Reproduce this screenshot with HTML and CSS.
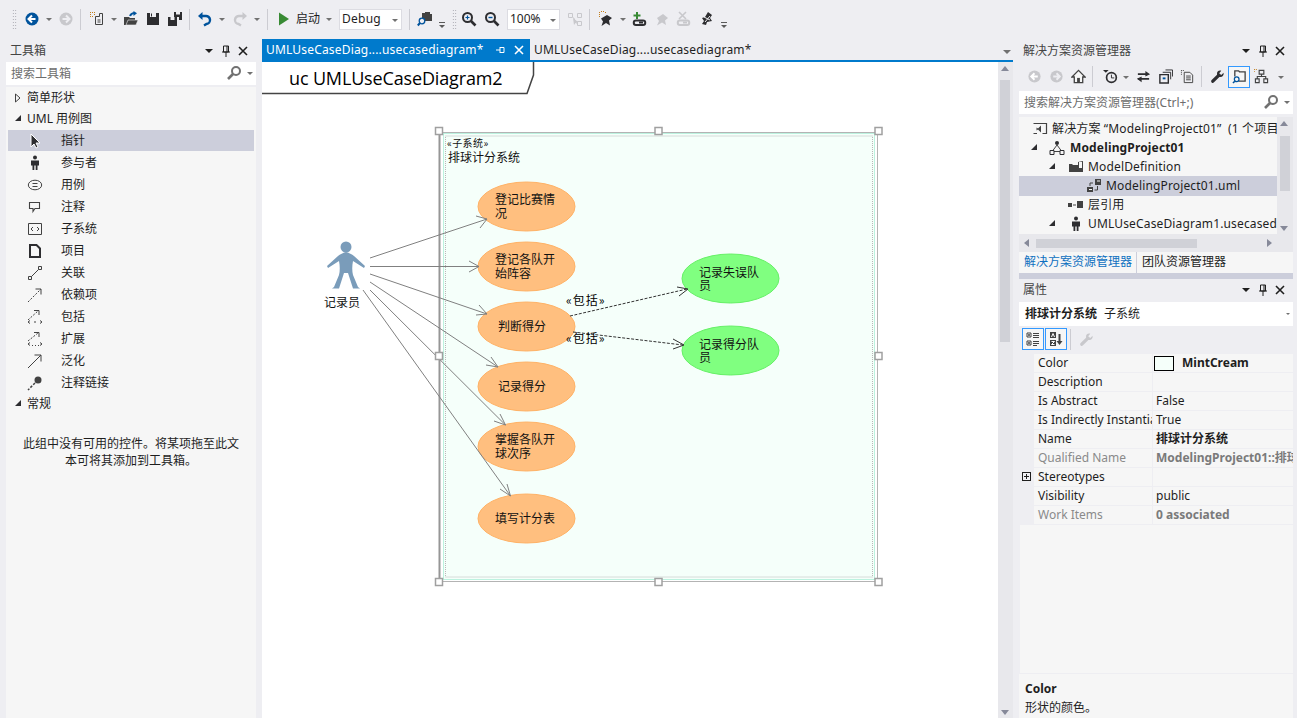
FILE: index.html
```html
<!DOCTYPE html>
<html lang="zh">
<head>
<meta charset="utf-8">
<title>UML</title>
<link rel="stylesheet" href="styles.css">
</head>
<body>
<svg class="defs" width="0" height="0">
  <defs>
    <symbol id="i-back" viewBox="0 0 16 16"><circle cx="8" cy="8" r="6.5" fill="currentColor"/><path d="M8 4.5 4.5 8 8 11.500M5 8h6.500" fill="none" stroke="#fff" stroke-width="2"/></symbol>
    <symbol id="i-fwd" viewBox="0 0 16 16"><circle cx="8" cy="8" r="6.500" fill="currentColor"/><path d="M8 4.500 11.500 8 8 11.500M11 8H4.500" fill="none" stroke="#eeeef2" stroke-width="2"/></symbol>
    <symbol id="i-new" viewBox="0 0 16 16"><path d="M6.500 5.500h4v-3h3v11h-7z" fill="none" stroke="#424242"/><path d="M8.500 9h3M8.500 11h3" stroke="#424242"/><path d="M1 1h1v1H1zM3 1h1v1H3zM5 1h1v1H5zM1 3h1v1H1zM5 3h1v1H5zM1 5h1v1H1zM3 5h1v1H3z" fill="#c27d1a"/></symbol>
    <symbol id="i-open" viewBox="0 0 16 16"><path d="M1 6h5l1 1h5v7H1z" fill="#424242"/><path d="M3 14 5 9h10l-2 5z" fill="#424242" stroke="#eeeef2" stroke-width=".6"/><path d="M7 5c1-2.500 3-3 5-3" fill="none" stroke="#00539c" stroke-width="2"/><path d="M10.500 0 14 2.200 10.500 5z" fill="#00539c"/></symbol>
    <symbol id="i-save" viewBox="0 0 16 16"><path d="M2 2h12v12H2z" fill="#2d2d30"/><path d="M5 2h6v4H5z" fill="#eeeef2"/><path d="M5 10h6v4H5z" fill="#2d2d30"/><path d="M6 2.500h1v3H6z" fill="#2d2d30"/></symbol>
    <symbol id="i-saveall" viewBox="0 0 16 16"><path d="M7 1h8v8h-3V6H7z" fill="#2d2d30"/><path d="M9 1h4v2.500H9z" fill="#eeeef2"/><path d="M1 6h9v9H1z" fill="#2d2d30"/><path d="M3.500 6h4v3h-4z" fill="#eeeef2"/></symbol>
    <symbol id="i-undo" viewBox="0 0 16 16"><path d="M3.500 5h5a4 4 0 0 1 1 8l-2.500 1.500" fill="none" stroke="currentColor" stroke-width="2.400"/><path d="M1 5 5.500 1v8z" fill="currentColor"/></symbol>
    <symbol id="i-redo" viewBox="0 0 16 16"><path d="M12.500 5h-5a4 4 0 0 0-1 8l2.500 1.500" fill="none" stroke="currentColor" stroke-width="2.400"/><path d="M15 5 10.500 1v8z" fill="currentColor"/></symbol>
    <symbol id="i-play" viewBox="0 0 16 16"><path d="M3 1.500 13 8 3 14.500z" fill="#388a34"/></symbol>
    <symbol id="i-find" viewBox="0 0 16 16"><path d="M5 2h3V1h5v2h2v7H8a4 4 0 0 0-3-2z" fill="#424242"/><circle cx="5" cy="10" r="2.800" fill="#eeeef2" stroke="#00539c" stroke-width="1.300"/><path d="M3 12 .8 14.500" stroke="#00539c" stroke-width="2"/></symbol>
    <symbol id="i-zoomin" viewBox="0 0 16 16"><circle cx="6.500" cy="6.500" r="4.500" fill="#eeeef2" stroke="#2d2d30" stroke-width="2"/><path d="m10 10 4.500 4.500" stroke="#2d2d30" stroke-width="2.600"/><path d="M4.500 6.500h4M6.500 4.500v4" stroke="#00539c" stroke-width="1.200"/></symbol>
    <symbol id="i-zoomout" viewBox="0 0 16 16"><circle cx="6.500" cy="6.500" r="4.500" fill="#eeeef2" stroke="#2d2d30" stroke-width="2"/><path d="m10 10 4.500 4.500" stroke="#2d2d30" stroke-width="2.600"/><path d="M4.500 6.500h4" stroke="#00539c" stroke-width="1.400"/></symbol>
    <symbol id="i-layout" viewBox="0 0 16 16"><path d="M1.500 2.500h4v4h-4zM10.500 2.500h4v4h-4zM10.500 10.500h4v4h-4zM6.500 6.500l3 6" fill="none" stroke="#c8c8cc"/><path d="m6 7 1 7 1.500-2 2.500-1z" fill="#c8c8cc"/></symbol>
    <symbol id="i-pinstar" viewBox="0 0 16 16"><path d="M9 4 14 7 11 9.500 12 14.500 8 12 3.500 15 5 10.500 3 7.500z" fill="#2d2d30"/><path d="M1 1h1v1H1zM3 0h1v1H3zM5 0h1v1H5zM7 1h1v1H7zM1 3h1v1H1zM1 5h1v1H1z" fill="#c27d1a"/></symbol>
    <symbol id="i-link" viewBox="0 0 16 16"><path d="M3 9.500h7a2.200 2.200 0 0 1 0 4.500H3a2.200 2.200 0 0 1 0-4.500z" transform="translate(1)" fill="none" stroke="currentColor" stroke-width="2"/><path d="M7 11.500h4" stroke="currentColor" stroke-width="2"/></symbol>
    <symbol id="i-linkadd" viewBox="0 0 16 16"><use href="#i-link"/><path d="M1.500 4.500h7M5 1v7" stroke="#388a34" stroke-width="2"/></symbol>
    <symbol id="i-linkdel" viewBox="0 0 16 16"><use href="#i-link"/><path d="m3 1 7 7M10 1 3 8" stroke="currentColor" stroke-width="1.600"/></symbol>
    <symbol id="i-pin" viewBox="0 0 16 16"><path d="M9 3 14 7 11 9.500 12 14 8 11.500 3 14.500 5 10 3 7z" fill="currentColor"/></symbol>
    <symbol id="i-walk" viewBox="0 0 16 16"><path d="m9 1 4 3-2 3 2 3-5 1-1 3-4-1 2-3-2-3 3-1z" fill="#2d2d30"/><path d="m5 6 6 3M6 11l5-6" stroke="#eeeef2"/></symbol>
    <symbol id="i-search" viewBox="0 0 16 16"><circle cx="10" cy="6" r="4" fill="none" stroke="#717171" stroke-width="2"/><path d="M7 9 2 14" stroke="#717171" stroke-width="2.600"/></symbol>
    <symbol id="i-home" viewBox="0 0 16 16"><path d="M8 1.500 1 8.500h2.500v6h9v-6H15z" fill="#f6f6f6" stroke="#424242" stroke-width="1.400"/><path d="M6.500 9.500h3v5h-3z" fill="#424242"/></symbol>
    <symbol id="i-clock" viewBox="0 0 16 16"><circle cx="9" cy="9" r="5.200" fill="none" stroke="#2d2d30" stroke-width="1.800"/><path d="M9 6v3.500h3" fill="none" stroke="#2d2d30"/><path d="M0 1h6L3 4z" fill="#2d2d30"/></symbol>
    <symbol id="i-sync" viewBox="0 0 16 16"><path d="M2 6h9M2 11h12" transform="translate(0 -.5)" stroke="#2d2d30" stroke-width="2"/><path d="m10 2 5 3.500L10 8zM6 8l-5 2.500L6 14z" fill="#2d2d30"/></symbol>
    <symbol id="i-collapse" viewBox="0 0 16 16"><path d="M2 6h9v9H2z" fill="none" stroke="#2d2d30" stroke-width="1.500"/><path d="M5 10h3" stroke="#00539c" stroke-width="2"/><path d="M5 3.500h8.500V11M8 1h7.500v7" fill="none" stroke="#2d2d30"/></symbol>
    <symbol id="i-props" viewBox="0 0 16 16"><path d="M1 1h1v1H1zM3 1h1v1H3zM1 3h1v1H1zM1 5h1v1H1z" fill="#424242"/><path d="M4.500 3.500h6l3 3v8h-9z" fill="none" stroke="#424242"/><path d="M6.500 7.500h5M6.500 9.500h5M6.500 11.500h5" stroke="#424242"/></symbol>
    <symbol id="i-wrench" viewBox="0 0 16 16"><path d="M14.500 4 12 6.500 9.800 4.500 12 1.800C9.500 1 7 2.500 7.500 6L1.500 12a1.800 1.800 0 0 0 2.500 2.500L10 8.500c3 .8 5-1.500 4.500-4.500z" fill="currentColor"/></symbol>
    <symbol id="i-viewfolder" viewBox="0 0 16 16"><path d="M3 8V2h4l1 1h6v10H7" fill="none" stroke="#424242" stroke-width="1.400"/><circle cx="5" cy="11" r="2.500" fill="none" stroke="#00539c" stroke-width="1.300"/><path d="M3 13 1 15" stroke="#00539c" stroke-width="1.600"/></symbol>
    <symbol id="i-class" viewBox="0 0 16 16"><path d="M5.500 1.500h5v4h-5zM1.500 10.500h4v4h-4zM10.500 10.500h4v4h-4zM8 5.500v2.500M3.500 10.500V8h9v2.500" fill="none" stroke="#424242" stroke-width="1.200"/><path d="M0 0h1v1H0zM2 0h1v1H2zM0 2h1v1H0z" fill="#c27d1a"/></symbol>
    <symbol id="i-sln" viewBox="0 0 16 16"><path d="M1.500 2.500h13v10h-4M5 12.500H1.500z" fill="none" stroke="#424242" stroke-width="1.200"/><path d="M6 8.500l3 3v-7l-3 3-1.500-1v3z" fill="#424242"/></symbol>
    <symbol id="i-model" viewBox="0 0 16 16"><circle cx="8" cy="3" r="2" fill="#2d2d30"/><path d="M8 5 3.500 11M8 5l4.500 6M3 11.500h10" fill="none" stroke="#424242"/><path d="M1 10.500h4v4H1zM11 10.500h4v4h-4z" fill="#f6f6f6" stroke="#2d2d30"/></symbol>
    <symbol id="i-folder" viewBox="0 0 16 16"><path d="M1 5h3l1 1h5V3l5-1v11H1z" fill="#424242"/><path d="M11 3h3v6h-3z" fill="#f6f6f6"/></symbol>
    <symbol id="i-uml" viewBox="0 0 16 16"><path d="M9 1h6v6H9zM1 9h6v5H1z" fill="#424242"/><path d="M11 2.500h3v1h-3zM3 11h3v1H3z" fill="#f6f6f6"/><path d="M11.500 8v4h-3M7 5H4v3" fill="none" stroke="#424242"/></symbol>
    <symbol id="i-layer" viewBox="0 0 16 16"><path d="M1 6h4v4H1zM10 4h6v7h-6z" fill="#424242"/><path d="M6 8h3" stroke="#424242"/></symbol>
    <symbol id="i-actor" viewBox="0 0 16 16"><circle cx="8" cy="2.500" r="2" fill="#2d2d30"/><path d="M4 5.500h8v5h-1.500V15H8.700v-4.500H7.300V15H5.500v-4.500H4z" fill="#2d2d30"/></symbol>
    <symbol id="i-pointer" viewBox="0 0 16 16"><path d="M4 1v13l3-3 2 4 2-1-2-4h4z" fill="#2d2d30" stroke="#fff"/></symbol>
    <symbol id="i-usecase" viewBox="0 0 16 16"><ellipse cx="8" cy="8" rx="6.700" ry="4.800" fill="none" stroke="#424242"/><path d="M5.500 6.500h5M5.500 9.500h5" stroke="#424242"/></symbol>
    <symbol id="i-comment" viewBox="0 0 16 16"><path d="M2.500 3.500h10v6H8l-2 3v-3H2.500z" fill="none" stroke="#424242" stroke-width="1.100"/></symbol>
    <symbol id="i-subsys" viewBox="0 0 16 16"><path d="M1.500 2.500h13v11h-13z" fill="none" stroke="#424242"/><path d="M6 6 4 8l2 2M10 6l2 2-2 2" fill="none" stroke="#424242"/></symbol>
    <symbol id="i-artifact" viewBox="0 0 16 16"><path d="M3 2h6.500L13 5.500V14H3z" fill="#f6f6f6" stroke="#2d2d30" stroke-width="2"/></symbol>
    <symbol id="i-assoc" viewBox="0 0 16 16"><path d="M1.500 11.500h3v3h-3zM11.500 1.500h3v3h-3zM4.500 11.500l7-7" fill="none" stroke="#424242"/></symbol>
    <symbol id="i-dep" viewBox="0 0 16 16"><path d="M1 15 14 2" fill="none" stroke="#424242" stroke-dasharray="2 1.500"/><path d="M8.500 2H14v5.500" fill="none" stroke="#424242"/></symbol>
    <symbol id="i-incl" viewBox="0 0 16 16"><path d="M1 11 11 2" fill="none" stroke="#424242" stroke-dasharray="2 1.500"/><path d="M7 1.500h5V6M3 11.500 1 13l2 1.500M13 11.500l2 1.500-2 1.500M7 13h2" fill="none" stroke="#424242"/></symbol>
    <symbol id="i-ext" viewBox="0 0 16 16"><path d="M1 10 11 2" fill="none" stroke="#424242" stroke-dasharray="2 1.500"/><path d="M7 1.500h5V6M3 11.500 1 13l2 1.500M13 11.500l2 1.500-2 1.500" fill="none" stroke="#424242"/><path d="M5 14h1v1H5zM8 14h1v1H8zM11 14h1v1h-1z" fill="#424242"/></symbol>
    <symbol id="i-gen" viewBox="0 0 16 16"><path d="M1 15 14 2M7.500 2H14v6.500" fill="none" stroke="#424242"/></symbol>
    <symbol id="i-note" viewBox="0 0 16 16"><circle cx="11" cy="5" r="3.500" fill="#424242"/><path d="M8 8 1 15" stroke="#424242" stroke-width="1.500" stroke-dasharray="2.500 1.500"/></symbol>
    <symbol id="i-cat" viewBox="0 0 16 16"><path d="M2 2h4v4H2zM2 10h4v4H2z" fill="none" stroke="#424242"/><path d="M8 2.500h6M8 4.500h6M8 6.500h6M8 10.500h6M8 12.500h6M8 14.500h4" stroke="#424242"/><path d="M3 4h2M4 3v2M3 12h2M4 11v2" stroke="#424242"/></symbol>
    <symbol id="i-az" viewBox="0 0 16 16"><path d="M2 1h6v6H2zM2 9h6v6H2z" fill="#424242"/><path d="M3.500 6l1.500-3.500L6.500 6M3.500 10.500h3l-3 3h3" fill="none" stroke="#fff"/><path d="M11.500 3v9" stroke="#424242" stroke-width="2"/><path d="M8.500 10h6l-3 4z" fill="#424242"/></symbol>
    <symbol id="i-tpin" viewBox="0 0 10 10"><path d="M1 5h4M5 2v6M5 2.500h4v5H5" fill="none" stroke="currentColor"/></symbol>
    <symbol id="i-x" viewBox="0 0 10 10"><path d="m1 1 8 8M9 1 1 9" stroke="currentColor" stroke-width="1.600"/></symbol>
    <symbol id="i-vpin" viewBox="0 0 10 12"><path d="M2.500 1h5v6h-5zM1 7h8M5 7v5M6 1v6" fill="none" stroke="currentColor"/></symbol>
    <symbol id="i-tri-r" viewBox="0 0 8 10"><path d="M1.500 1 6 5 1.500 9z" fill="#f6f6f6" stroke="#424242"/></symbol>
  </defs>
</svg>

<header class="toolbar">
  <span class="grip-v ml12"></span>
  <span class="ic blue ml4"><svg><use href="#i-back"/></svg></span><span class="ca"></span>
  <span class="ic off"><svg><use href="#i-fwd"/></svg></span>
  <span class="sep ml3"></span>
  <span class="ic ml5"><svg><use href="#i-new"/></svg></span><span class="ca"></span>
  <span class="ic"><svg><use href="#i-open"/></svg></span>
  <span class="ic"><svg><use href="#i-save"/></svg></span>
  <span class="ic"><svg><use href="#i-saveall"/></svg></span>
  <span class="sep ml3"></span>
  <span class="ic blue ml4"><svg><use href="#i-undo"/></svg></span><span class="ca"></span>
  <span class="ic off ml1"><svg><use href="#i-redo"/></svg></span><span class="ca"></span>
  <span class="sep ml4"></span>
  <span class="ic ml5"><svg><use href="#i-play"/></svg></span>
  <span class="tb-text">启动</span><span class="ca ml3"></span>
  <span class="combo combo-debug ml4">Debug<i class="ca-in"></i></span>
  <span class="sep ml7"></span>
  <span class="ic ml4"><svg><use href="#i-find"/></svg></span>
  <span class="over ml1"></span>
  <span class="grip-v ml3"></span>
  <span class="ic ml1"><svg><use href="#i-zoomin"/></svg></span>
  <span class="ic ml1"><svg><use href="#i-zoomout"/></svg></span>
  <span class="combo combo-zoom ml4">100%<i class="ca-in"></i></span>
  <span class="ic ml4"><svg><use href="#i-layout"/></svg></span>
  <span class="sep ml3"></span>
  <span class="ic ml5"><svg><use href="#i-pinstar"/></svg></span><span class="ca"></span>
  <span class="ic dark"><svg><use href="#i-linkadd"/></svg></span>
  <span class="ic off"><svg><use href="#i-pin"/></svg></span>
  <span class="ic off"><svg><use href="#i-linkdel"/></svg></span>
  <span class="ic ml1"><svg><use href="#i-walk"/></svg></span>
  <span class="over ml1"></span>
</header>

<main class="workspace">
  <aside class="toolbox">
    <div class="ptitle"><span>工具箱</span><span class="grip-h"></span><i class="t-caret"></i><svg class="t-pin"><use href="#i-vpin"/></svg><svg class="t-x"><use href="#i-x"/></svg></div>
    <div class="search search-tool"><span>搜索工具箱</span><svg class="s-ic"><use href="#i-search"/></svg><i class="ca-in"></i></div>
    <div class="tool-list">
      <div class="group"><svg class="tri-r"><use href="#i-tri-r"/></svg>简单形状</div>
      <div class="group"><i class="tri-down"></i>UML 用例图</div>
      <div class="tool selected"><svg><use href="#i-pointer"/></svg>指针</div>
      <div class="tool"><svg><use href="#i-actor"/></svg>参与者</div>
      <div class="tool"><svg><use href="#i-usecase"/></svg>用例</div>
      <div class="tool"><svg><use href="#i-comment"/></svg>注释</div>
      <div class="tool"><svg><use href="#i-subsys"/></svg>子系统</div>
      <div class="tool"><svg><use href="#i-artifact"/></svg>项目</div>
      <div class="tool"><svg><use href="#i-assoc"/></svg>关联</div>
      <div class="tool"><svg><use href="#i-dep"/></svg>依赖项</div>
      <div class="tool"><svg><use href="#i-incl"/></svg>包括</div>
      <div class="tool"><svg><use href="#i-ext"/></svg>扩展</div>
      <div class="tool"><svg><use href="#i-gen"/></svg>泛化</div>
      <div class="tool"><svg><use href="#i-note"/></svg>注释链接</div>
      <div class="group group-last"><i class="tri-down"></i>常规</div>
      <p class="empty">此组中没有可用的控件。将某项拖至此文<br>本可将其添加到工具箱。</p>
    </div>
  </aside>

  <section class="editor">
    <div class="tabs">
      <div class="tab active"><span class="tab-name">UMLUseCaseDiag....usecasediagram*</span><svg class="tab-pin"><use href="#i-tpin"/></svg><svg class="tab-x"><use href="#i-x"/></svg></div>
      <div class="tab"><span class="tab-name">UMLUseCaseDiag....usecasediagram*</span></div>
      <i class="tabs-caret"></i>
    </div>
    <div class="doc">
      <div class="canvas">
        <svg class="diagram" viewBox="262 62 736 656" width="736" height="656">
          <path class="frame" d="M262 93.500H527L533.500 75V62"/>
          <text class="uc-title" x="289" y="85">uc UMLUseCaseDiagram2</text>

          <rect class="sys-fill" x="443.500" y="133.500" width="431" height="446"/>
          <rect class="sys-dots" x="445.500" y="136" width="427" height="441"/>
          <rect class="sel-dash" x="439.500" y="132.500" width="438" height="449"/>
          <path class="sel-left" d="M439.500 131V582"/>
          <text class="small" x="447" y="147">«子系统»</text>
          <text class="lbl" x="448" y="162">排球计分系统</text>

          <g class="orange">
            <ellipse cx="526.500" cy="206.500" rx="48.500" ry="24.500"/>
            <ellipse cx="526.500" cy="266.500" rx="48.500" ry="24.500"/>
            <ellipse cx="526.500" cy="326.500" rx="48.500" ry="24.500"/>
            <ellipse cx="526.500" cy="386.500" rx="48.500" ry="24.500"/>
            <ellipse cx="526.500" cy="446.500" rx="48.500" ry="24.500"/>
            <ellipse cx="526.500" cy="518.500" rx="48.500" ry="24.500"/>
          </g>
          <g class="green">
            <ellipse cx="730.500" cy="278.500" rx="48.500" ry="24.500"/>
            <ellipse cx="730.500" cy="350.500" rx="48.500" ry="24.500"/>
          </g>

          <g class="assoc">
            <path d="M370 258 487 219M476 216 487 219 480 228"/>
            <path d="M370 266.500H479M469 261 479 266.500 469 272"/>
            <path d="M370 274 487 314M479 305 487 314 476 315"/>
            <path d="M370 282 498 367M491 357 498 367 486 365"/>
            <path d="M370 290 505.500 425M500 414 505.500 425 494 421"/>
            <path d="M363 290 510.500 496M507 484 510.500 496 500 489"/>
          </g>
          <g class="incl">
            <path class="dash" d="M570 316 687 289"/>
            <path d="M677 287 688 289 679 296"/>
            <path class="dash" d="M573 332 683 345"/>
            <path d="M673 339 684 345 673 349"/>
          </g>

          <circle class="actor" cx="346" cy="247" r="5.500"/>
          <path class="actor" d="M346 252C349 253 352 254 354 256L365 266 364 268 353 261C352 266 352 271 353 275L358 287 360 288.500H353L348 273H344L339 288.500H332L334 287 339 275C340 271 340 266 339 261L328 268 327 266 338 256C340 254 343 253 346 252Z"/>
          <text class="lbl" x="324" y="307">记录员</text>

          <g class="lbl">
            <text x="495" y="203.500">登记比赛情</text><text x="495" y="217.500">况</text>
            <text x="495" y="263.500">登记各队开</text><text x="495" y="277.500">始阵容</text>
            <text x="498" y="331">判断得分</text>
            <text x="498" y="390.500">记录得分</text>
            <text x="495" y="443.500">掌握各队开</text><text x="495" y="457.500">球次序</text>
            <text x="495" y="522.500">填写计分表</text>
            <text x="699" y="276.500">记录失误队</text><text x="699" y="290">员</text>
            <text x="699" y="348.500">记录得分队</text><text x="699" y="362">员</text>
            <text class="incl-lbl" x="566" y="305">«包括»</text>
            <text class="incl-lbl" x="566" y="343">«包括»</text>
          </g>

          <g class="handles">
            <rect x="435.500" y="127.500" width="7" height="7"/><rect x="655" y="127.500" width="7" height="7"/><rect x="875" y="127.500" width="7" height="7"/>
            <rect x="435.500" y="352.500" width="7" height="7"/><rect x="875" y="352.500" width="7" height="7"/>
            <rect x="435.500" y="578.500" width="7" height="7"/><rect x="655" y="578.500" width="7" height="7"/><rect x="875" y="578.500" width="7" height="7"/>
          </g>
        </svg>
      </div>
      <div class="vscroll">
        <i class="ar-up"></i>
        <span class="thumb"></span>
        <i class="ar-down"></i>
      </div>
    </div>
  </section>

  <aside class="right">
    <div class="ptitle"><span>解决方案资源管理器</span><span class="grip-h"></span><i class="t-caret"></i><svg class="t-pin"><use href="#i-vpin"/></svg><svg class="t-x"><use href="#i-x"/></svg></div>
    <div class="se-bar">
      <span class="ic off"><svg><use href="#i-back"/></svg></span>
      <span class="ic off"><svg><use href="#i-fwd"/></svg></span>
      <span class="ic"><svg><use href="#i-home"/></svg></span>
      <span class="sep-s"></span>
      <span class="ic"><svg><use href="#i-clock"/></svg></span><span class="ca-s"></span>
      <span class="ic"><svg><use href="#i-sync"/></svg></span>
      <span class="ic"><svg><use href="#i-collapse"/></svg></span>
      <span class="ic"><svg><use href="#i-props"/></svg></span>
      <span class="sep-s sep-s2"></span>
      <span class="ic dark"><svg><use href="#i-wrench"/></svg></span>
      <span class="ic on"><svg><use href="#i-viewfolder"/></svg></span>
      <span class="ic"><svg><use href="#i-class"/></svg></span><span class="ca-s ml4"></span>
    </div>
    <div class="search search-se"><span>搜索解决方案资源管理器(Ctrl+;)</span><svg class="s-ic"><use href="#i-search"/></svg><i class="ca-in"></i></div>
    <div class="tree-wrap">
      <div class="tree">
        <div class="row d1"><svg><use href="#i-sln"/></svg><span>解决方案&nbsp;“ModelingProject01”&nbsp;&nbsp;(1 个项目)</span></div>
        <div class="row d2"><i class="tri-down"></i><svg><use href="#i-model"/></svg><b>ModelingProject01</b></div>
        <div class="row d3"><i class="tri-down"></i><svg><use href="#i-folder"/></svg><span>ModelDefinition</span></div>
        <div class="row d4 selected"><svg><use href="#i-uml"/></svg><span>ModelingProject01.uml</span></div>
        <div class="row d3b"><svg><use href="#i-layer"/></svg><span>层引用</span></div>
        <div class="row d3"><i class="tri-down"></i><svg><use href="#i-actor"/></svg><span>UMLUseCaseDiagram1.usecasediagram</span></div>
      </div>
      <div class="tree-v"><i class="ar-up"></i><span class="tv-thumb"></span><i class="ar-down"></i></div>
    </div>
    <div class="tree-h"><i class="ar-left"></i><span class="th-thumb"></span><i class="ar-right"></i></div>
    <div class="r-tabs"><span class="r-tab active">解决方案资源管理器</span><span class="r-tab">团队资源管理器</span></div>
    <div class="splitter"></div>
    <div class="ptitle prop-title"><span>属性</span><span class="grip-h"></span><i class="t-caret"></i><svg class="t-pin"><use href="#i-vpin"/></svg><svg class="t-x"><use href="#i-x"/></svg></div>
    <div class="prop-combo"><b>排球计分系统</b><span>子系统</span><i class="ca-in"></i></div>
    <div class="prop-bar">
      <span class="pb on"><svg><use href="#i-cat"/></svg></span>
      <span class="pb on"><svg><use href="#i-az"/></svg></span>
      <span class="sep-p"></span>
      <span class="ic off"><svg><use href="#i-wrench"/></svg></span>
    </div>
    <div class="props">
      <div class="p-row"><span class="p-g"></span><span class="p-n">Color</span><span class="p-v"><i class="swatch"></i><b>MintCream</b></span></div>
      <div class="p-row"><span class="p-g"></span><span class="p-n">Description</span><span class="p-v"></span></div>
      <div class="p-row"><span class="p-g"></span><span class="p-n">Is Abstract</span><span class="p-v">False</span></div>
      <div class="p-row"><span class="p-g"></span><span class="p-n">Is Indirectly Instantiated</span><span class="p-v">True</span></div>
      <div class="p-row"><span class="p-g"></span><span class="p-n">Name</span><span class="p-v"><b>排球计分系统</b></span></div>
      <div class="p-row ro"><span class="p-g"></span><span class="p-n">Qualified Name</span><span class="p-v"><b>ModelingProject01::排球计分系统</b></span></div>
      <div class="p-row"><span class="p-g"><i class="plus"></i></span><span class="p-n">Stereotypes</span><span class="p-v"></span></div>
      <div class="p-row"><span class="p-g"></span><span class="p-n">Visibility</span><span class="p-v">public</span></div>
      <div class="p-row ro"><span class="p-g"></span><span class="p-n">Work Items</span><span class="p-v"><b>0 associated</b></span></div>
      <div class="p-fill"></div>
    </div>
    <div class="desc"><b>Color</b><span>形状的颜色。</span></div>
  </aside>
</main>
</body>
</html>
```

FILE: styles.css
```css
* { box-sizing: border-box; }
html, body { margin: 0; height: 718px; overflow: hidden; }
body {
  width: 1297px;
  background: #eeeef2;
  color: #1e1e1e;
  font: 12px/16px "Noto Sans", "Noto Sans CJK SC", sans-serif;
  display: flex;
  flex-direction: column;
}
.defs { position: absolute; }
i { display: block; font-style: normal; }
b { font-weight: 700; }

/* main toolbar */
.toolbar { height: 39px; display: flex; align-items: center; flex: none; padding-bottom: 1px; }
.ic { width: 22px; height: 22px; display: flex; align-items: center; justify-content: center; flex: none; color: #424242; }
.ic svg { width: 16px; height: 16px; }
.ic.blue { color: #00539c; }
.ic.off { color: #c8c8cc; }
.ic.dark { color: #2d2d30; }
.ic.on { border: 1px solid #3399ff; background: #f6f6f6; }
.ca { width: 12px; height: 22px; flex: none; position: relative; }
.ca::after, .ca-s::after { content: ""; position: absolute; left: 3px; top: 10px; border: 3px solid transparent; border-top: 3px solid #717171; border-bottom: 0; }
.sep { width: 1px; height: 21px; background: #ccccd2; flex: none; }
.grip-v { width: 5px; height: 20px; flex: none; background: radial-gradient(circle, #a0a0a8 .7px, transparent .8px) 0 0 / 2.5px 3px; }
.tb-text { width: 25px; flex: none; color: #1e1e1e; white-space: nowrap; padding-left: 1px; }
.combo { height: 21px; background: #fff; border: 1px solid #dcdce2; flex: none; padding: 1px 0 0 2px; position: relative; }
.combo-debug { width: 63px; letter-spacing: .25px; }
.combo-zoom { width: 53px; }
.ca-in { position: absolute; right: 3px; top: 9px; border: 3px solid transparent; border-top: 3px solid #717171; border-bottom: 0; }
.over { width: 12px; height: 22px; flex: none; position: relative; }
.over::before { content: ""; position: absolute; left: 2px; top: 14px; width: 6px; height: 1px; background: #5a5a5a; }
.over::after { content: ""; position: absolute; left: 2px; top: 17px; border: 3px solid transparent; border-top: 3px solid #5a5a5a; border-bottom: 0; }
.ml1 { margin-left: 1px; } .ml3 { margin-left: 3px; } .ml4 { margin-left: 4px; }
.ml5 { margin-left: 5px; } .ml7 { margin-left: 7px; } .ml12 { margin-left: 12px; }

/* workspace */
.workspace { flex: 1; display: grid; grid-template-columns: 262px 757px 278px; min-height: 0; }

/* panel title */
.ptitle { height: 23px; display: flex; align-items: center; color: #444; padding-right: 5px; flex: none; }
.grip-h { flex: 1; height: 5px; margin: 0 8px 0 7px; background: radial-gradient(circle, #b0b0b8 .6px, transparent .7px) 0 0 / 2px 2px; }
.t-caret { width: 0; height: 0; border: 4px solid transparent; border-top: 4px solid #1e1e1e; border-bottom: 0; margin-right: 8px; }
.t-pin { width: 10px; height: 12px; color: #1e1e1e; margin-right: 7px; }
.t-x { width: 10px; height: 10px; color: #1e1e1e; margin-right: 3px; }

/* toolbox */
.toolbox { padding: 0 6px; display: flex; flex-direction: column; box-sizing: content-box; width: 250px; }
.toolbox .ptitle { padding-left: 4px; }
.search { height: 23px; background: #fff; display: flex; align-items: center; position: relative; color: #6d6d6d; flex: none; padding-left: 5px; }
.s-ic { width: 16px; height: 16px; position: absolute; right: 14px; top: 3px; }
.search .ca-in { top: 10px; }
.search-tool { margin-bottom: 2px; }
.tool-list { flex: 1; background: #f6f6f6; }
.group { height: 21px; display: flex; align-items: center; padding-left: 21px; position: relative; }
.group-last { margin-top: -1px; }
.group i { position: absolute; left: 9px; top: 7px; }
.tri-r { position: absolute; left: 8px; top: 6px; width: 8px; height: 10px; }
.tri-down { width: 0; height: 0; border-right: 6px solid #2d2d30; border-top: 6px solid transparent; }
.tool { height: 22px; display: flex; align-items: center; padding-left: 53px; position: relative; margin: 0 2px; }
.tool svg { position: absolute; left: 19px; top: 3px; width: 16px; height: 16px; }
.tool.selected { background: #cccedb; height: 21px; margin-top: 1px; margin-bottom: 1px; }
.empty { margin: 21px 0 0; text-align: center; line-height: 17px; }

/* editor */
.editor { display: flex; flex-direction: column; min-width: 0; }
.tabs { height: 23px; display: flex; flex: none; border-bottom: 2px solid #007acc; margin-right: 6px; position: relative; }
.tab { height: 21px; padding: 1px 0 0 4px; display: flex; align-items: center; color: #1e1e1e; white-space: nowrap; }
.tab-name { letter-spacing: .18px; }
.tab.active { background: #007acc; color: #fff; width: 268px; position: relative; }
.tab-pin { width: 10px; height: 10px; margin-left: 11px; }
.tab-x { width: 10px; height: 10px; margin-left: 9px; }
.tabs-caret { position: absolute; right: 2px; top: 11px; border: 4px solid transparent; border-top: 4px solid #717171; border-bottom: 0; }
.doc { flex: 1; display: flex; margin-right: 6px; min-height: 0; }
.canvas { width: 736px; background: #fff; flex: none; }
.diagram { display: block; font-family: "Noto Sans CJK SC", sans-serif; }
.vscroll { flex: 1; background: #e8e8ec; position: relative; }
.thumb { position: absolute; left: 2px; top: 18px; width: 10px; height: 262px; background: #d0d1d7; }
.ar-up { position: absolute; left: 3px; top: 4px; border: 4.5px solid transparent; border-bottom: 5px solid #868999; border-top: 0; }
.ar-down { position: absolute; left: 3px; bottom: 3px; border: 4.5px solid transparent; border-top: 5px solid #868999; border-bottom: 0; }

/* diagram */
.frame { fill: none; stroke: #444; stroke-width: 1.500; }
.uc-title { font: 18px "Open Sans", "Noto Sans", sans-serif; letter-spacing: -.15px; fill: #000; }
.sys-fill { fill: #f5fffa; stroke: #bdf2df; }
.sys-dots { fill: none; stroke: #b8b8b8; stroke-dasharray: 1 1; }
.sel-left { stroke: #969696; stroke-width: 2; }
.sel-dash { fill: none; stroke: #666; stroke-dasharray: 1 1; }
.small { font-size: 10px; letter-spacing: .4px; fill: #111; }
.lbl { font-size: 12px; fill: #111; }
.incl-lbl { letter-spacing: 1px; fill: #000; }
.orange { fill: #ffbf7f; stroke: #ffb266; }
.green { fill: #80ff80; stroke: #66f066; }
.assoc { fill: none; stroke: #808080; }
.incl { fill: none; stroke: #333; }
.incl .dash { stroke-dasharray: 3 1.500; }
.actor { fill: #7a9cba; }
.handles { fill: #fff; stroke: #a0a0a0; stroke-width: 1.500; }

/* right column */
.right { display: flex; flex-direction: column; width: 274px; }
.right .ptitle { padding-left: 4px; padding-right: 5px; }
.se-bar { height: 29px; display: flex; align-items: center; padding-left: 4px; flex: none; }
.se-bar .ic svg { width: 15px; height: 15px; }
.ca-s { width: 11px; height: 22px; position: relative; flex: none; }
.ca-s::after { left: 2px; }
.sep-s { width: 1px; height: 21px; background: #ccccd2; margin: 0 6px 0 3px; flex: none; }
.sep-s2 { margin-right: 4px; }
.search-se { margin-bottom: 3px; }
.tree-wrap { height: 117px; display: flex; background: #f6f6f6; flex: none; }
.tree { flex: 1; min-width: 0; overflow: hidden; padding-top: 2px; }
.row { height: 19px; display: flex; align-items: center; white-space: nowrap; position: relative; letter-spacing: .15px; }
.row svg { width: 16px; height: 16px; flex: none; position: absolute; top: 2px; }
.row > i { position: absolute; top: 6px; }
.d1 { padding-left: 33px; } .d1 svg { left: 13px; }
.d2 { padding-left: 51px; } .d2 svg { left: 30px; } .d2 > i { left: 12px; }
.d3 { padding-left: 69px; } .d3 svg { left: 49px; } .d3 > i { left: 30px; }
.d3b { padding-left: 69px; } .d3b svg { left: 48px; }
.d4 { padding-left: 87px; } .d4 svg { left: 67px; }
.row.selected { background: #cccedb; height: 20px; margin-bottom: -1px; }
.tree-v { width: 16px; background: #e8e8ec; position: relative; flex: none; }
.tv-thumb { position: absolute; left: 3px; top: 19px; width: 10px; height: 55px; background: #d0d1d7; }
.tree-h { height: 18px; background: #e8e8ec; position: relative; flex: none; }
.th-thumb { position: absolute; left: 17px; top: 5px; height: 9px; width: 161px; background: #d0d1d7; }
.ar-left { position: absolute; left: 5px; top: 5px; border: 4.5px solid transparent; border-right: 5px solid #868999; border-left: 0; }
.ar-right { position: absolute; right: 21px; top: 5px; border: 4.5px solid transparent; border-left: 5px solid #868999; border-right: 0; }
.r-tabs { height: 21px; display: flex; background: #f6f6f6; flex: none; }
.r-tab { padding: 2px 4px 0 5px; border-right: 1px solid #cccedb; height: 21px; white-space: nowrap; color: #1e1e1e; }
.r-tab:last-child { border-right: 0; padding-left: 5px; }
.r-tab.active { color: #0e70c0; }
.splitter { height: 6px; background: #cccedb; flex: none; }
.prop-title { height: 23px; padding-bottom: 1px; }
.prop-combo { height: 24px; background: #fff; display: flex; align-items: center; gap: 7px; padding-left: 6px; flex: none; position: relative; }
.prop-combo .ca-in { top: 11px; border-width: 2.500px; }
.prop-bar { height: 28px; display: flex; align-items: center; padding: 0 0 2px 3px; flex: none; gap: 1px; }
.pb { width: 22px; height: 22px; display: flex; align-items: center; justify-content: center; }
.pb.on { border: 1px solid #3399ff; background: #f6f6f6; }
.pb svg { width: 16px; height: 16px; }
.sep-p { width: 1px; height: 21px; background: #ccccd2; margin: 0 3px 0 2px; }
.prop-bar .ic svg { width: 15px; height: 15px; }
.props { flex: 1; display: flex; flex-direction: column; min-height: 0; }
.p-row { height: 19px; display: flex; flex: none; background: #f6f6f6; }
.p-g { width: 15px; background: #eeeef2; flex: none; position: relative; }
.p-n { width: 119px; flex: none; padding-left: 4px; overflow: hidden; white-space: nowrap; border-bottom: 1px solid #eeeef2; border-right: 1px solid #eeeef2; line-height: 18px; }
.p-v { flex: 1; min-width: 0; padding-left: 3px; overflow: hidden; white-space: nowrap; border-bottom: 1px solid #eeeef2; display: flex; align-items: center; height: 19px; }
.ro .p-n { color: #8a8a8a; }
.ro .p-v { color: #7a7a7a; }
.swatch { width: 20px; height: 15px; border: 1px solid #000; background: #f5fffa; margin: 0 8px 0 -2px; flex: none; }
.plus { position: absolute; left: 3px; top: 4px; width: 9px; height: 9px; border: 1px solid #1e1e1e; background: linear-gradient(#1e1e1e, #1e1e1e) center / 5px 1px no-repeat, linear-gradient(#1e1e1e, #1e1e1e) center / 1px 5px no-repeat; }
.p-fill { flex: 1; background: #f6f6f6; margin-left: 1px; border-bottom: 1px solid #eeeef2; }
.desc { height: 44px; background: #f6f6f6; flex: none; padding: 7px 0 0 6px; display: flex; flex-direction: column; }
.desc span { line-height: 18px; margin-top: 2px; }
```
